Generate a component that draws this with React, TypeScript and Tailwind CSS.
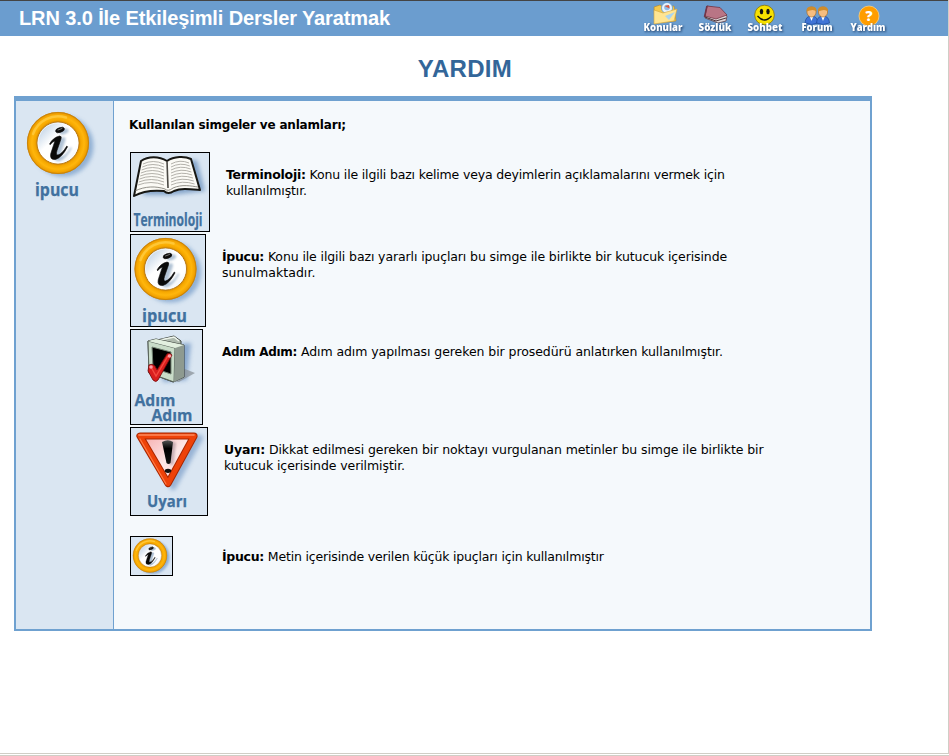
import React from "react";

const LABEL = "'Open Sans', 'Noto Sans', sans-serif";

function Label({ x, y, w, size, children }: { x: number; y: number; w: number; size: number; children: string }) {
  return (
    <text x={x} y={y} textLength={w} lengthAdjust="spacingAndGlyphs" fontFamily={LABEL} fontWeight="700" fontSize={size} fill="#41719f" stroke="#41719f" strokeWidth="0.25">
      {children}
    </text>
  );
}

function Defs() {
  return (
    <svg width="0" height="0" className="absolute">
      <defs>
        <filter id="soft" x="-30%" y="-30%" width="160%" height="160%">
          <feGaussianBlur stdDeviation="2.2" />
        </filter>
        <filter id="soft1" x="-30%" y="-30%" width="160%" height="160%">
          <feGaussianBlur stdDeviation="1" />
        </filter>
        <radialGradient id="gold" gradientUnits="userSpaceOnUse" cx="0" cy="0" r="31.5">
          <stop offset="0.66" stopColor="#d98a00" />
          <stop offset="0.73" stopColor="#f6a800" />
          <stop offset="0.83" stopColor="#ffb60c" />
          <stop offset="0.93" stopColor="#f2a200" />
          <stop offset="1" stopColor="#c07a08" />
        </radialGradient>
        <linearGradient id="glass" x1="0" y1="0" x2="1" y2="1">
          <stop offset="0" stopColor="#a9c2dd" />
          <stop offset="0.4" stopColor="#ffffff" />
          <stop offset="0.75" stopColor="#ffffff" />
          <stop offset="1" stopColor="#dbe4ee" />
        </linearGradient>
        <linearGradient id="ink" x1="0" y1="0" x2="0" y2="1">
          <stop offset="0" stopColor="#555" />
          <stop offset="0.35" stopColor="#000" />
          <stop offset="1" stopColor="#111" />
        </linearGradient>
        <linearGradient id="pink" x1="0" y1="0" x2="1" y2="1">
          <stop offset="0" stopColor="#f5a9a9" />
          <stop offset="0.5" stopColor="#fde6e6" />
          <stop offset="1" stopColor="#f9cccc" />
        </linearGradient>
      </defs>
    </svg>
  );
}

function InfoMark() {
  return (
    <g fill="currentColor" stroke="currentColor" strokeWidth="0.6">
      <ellipse cx="2" cy="-12.500" rx="4.600" ry="2.300" transform="rotate(-20 2 -12.500)" />
      <path d="M-8.500 1.500 Q-5 -5 1.500 -6.500 Q4 -6.500 3 -3.500 L-1 8 Q-2.500 13 0 12.500 Q4 11.500 8.800 3.500 L9.600 4.200 Q4 15 -2.500 17 Q-8.500 17.500 -7.300 11.500 Q-6.500 8.500 -3 -1.500 Q-5.500 -1 -7.800 2.200 Z" />
    </g>
  );
}

function InfoRing() {
  return (
    <g>
      <circle cx="5" cy="3" r="30.5" fill="#7fa3cc" opacity="0.8" filter="url(#soft)" />
      <circle r="31" fill="url(#gold)" />
      <circle r="30.6" fill="none" stroke="#c98208" strokeWidth="0.8" />
      <path d="M-25 -9 A26.500 26.500 0 0 1 8 -25.500" fill="none" stroke="#ffcf48" strokeWidth="2.5" strokeLinecap="round" opacity="0.7" />
      <circle r="21" fill="url(#glass)" stroke="#b87a18" strokeWidth="1" />
      <circle r="20" fill="none" stroke="#fff" strokeWidth="1" opacity="0.6" />
      <g transform="translate(4 1)" color="#9db3ca" opacity="0.8" filter="url(#soft1)"><InfoMark /></g>
      <g transform="translate(0 -0.500)" color="#0a0a0a"><InfoMark /></g>
      <path d="M0 -13 L4 -14.500" stroke="#777" strokeWidth="1" strokeLinecap="round" />
    </g>
  );
}

function Book() {
  const rows = [0, 1, 2, 3, 4, 5, 6, 7];
  return (
    <svg width="78" height="78" className="block overflow-visible">
      <path d="M16 10 L66 7 L74 38 L40 42 L12 42 Z" fill="#6f94c0" opacity="0.8" filter="url(#soft)" />
      <path d="M10 8 C17 3 28 3 36 8 C43 3 54 3 60 6 L69 37 C58 36 50 35 43 38 Q37 42 33 38 C23 37 12 38 3 43 Z" fill="#fbfaf5" stroke="#171713" strokeWidth="2" strokeLinejoin="round" />
      <path d="M4 38 C14 33 25 33 34 36 Q37 39 42 35 C51 31 60 33 67 34" fill="none" stroke="#77756c" strokeWidth="0.8" />
      <path d="M36 8 L37 35" stroke="#4b4944" strokeWidth="1.6" />
      {rows.map((i) => (
        <g key={i} fill="none" stroke="#aaa8a2" strokeWidth="0.9">
          <path d={`M${12 - i * 0.7} ${11 + i * 3} Q${22 - i * 0.3} ${6 + i * 3} 33 ${11 + i * 3}`} />
          <path d={`M40 ${11 + i * 3} Q${49 + i * 0.3} ${6 + i * 3} ${58 + i * 0.8} ${10 + i * 3}`} />
        </g>
      ))}
      <Label x={2.5} y={73} w={69} size={17}>Terminoloji</Label>
    </svg>
  );
}

function Monitor() {
  return (
    <svg width="71" height="94" className="block overflow-visible">
      <path d="M26 16 L60 13 L56 50 L32 52 Z" fill="#7095c3" opacity="0.75" filter="url(#soft)" />
      <path d="M40 51 L54 39 L64 43 L48 52 Z" fill="#8b9399" opacity="0.75" />
      <path d="M26 10 L43 6 L50 11 L50 17 L30 14 Z" fill="#aeb9ad" stroke="#3b423c" />
      <path d="M29 10 L43 7 L48 11" fill="none" stroke="#eef5ec" strokeWidth="1.5" />
      <path d="M17 11 L25 9 L53 15 L53 47 L42 52 L18 43 Z" fill="#9aa79b" stroke="#353b36" />
      <path d="M17 11 L44 18 L43 52 L18 43 Z" fill="#c9dcc8" stroke="#59645b" />
      <path d="M44 18 L53 15 L53 47 L43 52 Z" fill="#8e9a90" />
      <path d="M17 11 L25 9 L53 15 L44 18 Z" fill="#e2efdf" />
      <path d="M21 17 L40 22 L40 44 L22 38 Z" fill="#000" stroke="#718071" />
      <path d="M18 35 Q21 33 24 36 L26 40 L36 24 Q38 22 41 25 L27 50 Q25 53 22 50 L17 41 Z" fill="#d91e1e" stroke="#6e0808" strokeWidth="0.8" />
      <path d="M20 37 L25 46 L37 26" fill="none" stroke="#f2493f" strokeWidth="1.4" />
      <circle cx="38.5" cy="26" r="1.800" fill="#ff9ba5" />
      <circle cx="20" cy="37" r="1.800" fill="#ff9ba5" />
      <Label x={3.5} y={75.5} w={41} size={16.5}>Adım</Label>
      <Label x={20.5} y={90.5} w={41} size={16.5}>Adım</Label>
    </svg>
  );
}

function Warning() {
  return (
    <svg width="76" height="87" className="block overflow-visible">
      <path d="M13 10 L69 10 L42 59 Z" fill="#7d9fc9" stroke="#7d9fc9" strokeWidth="6" strokeLinejoin="round" opacity="0.7" filter="url(#soft)" />
      <path d="M9 8 L63 8 L37 55.500 Z" fill="url(#pink)" stroke="#a82600" strokeWidth="7.200" strokeLinejoin="round" />
      <path d="M9 8 L63 8 L37 55.500 Z" fill="none" stroke="#ee4209" strokeWidth="5.200" strokeLinejoin="round" />
      <path d="M8 7 L63 7" fill="none" stroke="#ff8a5c" strokeWidth="1.600" strokeLinecap="round" />
      <path d="M9 11 L35 56" fill="none" stroke="#ff7a45" strokeWidth="1.200" strokeLinecap="round" />
      <path d="M31 14 Q37 10.500 42 14 L39.500 35 Q37.500 37 35.500 35 Z" fill="#a98f98" opacity="0.6" filter="url(#soft1)" transform="translate(3 1)" />
      <path d="M31 14 Q37 10.500 42 14 L39.500 35 Q37.500 37 35.500 35 Z" fill="url(#ink)" />
      <ellipse cx="37" cy="42.800" rx="3.200" ry="2.100" fill="#111" />
      <Label x={16} y={79} w={40} size={16.5}>Uyarı</Label>
    </svg>
  );
}

function Nav({ label, w, ml, children }: { label: string; w: number; ml: string; children: React.ReactNode }) {
  return (
    <a className={`block ${ml}`}>
      <svg width="50" height="34" className="block overflow-visible">
        {children}
        <text x={25 - w / 2} y="30" textLength={w} lengthAdjust="spacingAndGlyphs" fontFamily={LABEL} fontWeight="800" fontSize="10" fill="#fff" className="drop-shadow-[1px_1px_1px_#1f3f6b]">{label}</text>
      </svg>
    </a>
  );
}

function Person() {
  return (
    <g>
      <path d="M-6.500 9 Q-6 2 0 2 Q6 2 6.500 9 Q0 12 -6.500 9 Z" fill="#3f74d6" stroke="#183f91" strokeWidth="0.6" />
      <path d="M-2 2 L0 7 L2 2 Z" fill="#fff" />
      <ellipse cy="-2" rx="4.600" ry="5" fill="#f6bd80" stroke="#a5651d" strokeWidth="0.6" />
      <path d="M-5 -2.500 Q-5.500 -7.500 0 -7.500 Q5.500 -7.500 5 -2.500 Q2 -5.500 -5 -2.500 Z" fill="#d08c2a" />
    </g>
  );
}

function Row({ box, art, gap, first, second, term, top, tb, ls, ls2 }: {
  box: string; art: React.ReactNode; gap: string; first: string; second?: string; term: string; top: string; tb: string; ls: string; ls2?: string;
}) {
  return (
    <div className="flex items-start">
      <div className={`shrink-0 border border-black bg-[#dae6f2] ${box}`}>{art}</div>
      <p className={`whitespace-nowrap ${gap} ${top}`}>
        <span className={`block ${ls}`}><b className={tb}>{term}</b> {first}</span>
        {second && <span className={`block ${ls2}`}>{second}</span>}
      </p>
    </div>
  );
}

export default function App() {
  return (
    <div className="flex h-[756px] w-[949px] flex-col overflow-hidden bg-white">
      <Defs />
      <div className="flex h-[754px] flex-col border-r border-b border-[#d0cec6]">
        <header className="flex h-9 shrink-0 border-t border-[#444] bg-[#6b9dcf]">
          <h1 className="w-[618px] whitespace-nowrap pl-[19px] font-['Liberation_Sans',Arial,sans-serif] text-[20px] leading-[34px] font-bold tracking-[-0.11px] text-white">LRN 3.0 İle Etkileşimli Dersler Yaratmak</h1>
          <nav className="flex">
            <Nav label="Konular" w={39} ml="ml-[20px]">
              <path d="M16 6 L22 4 L25 6 L36 5 L38 20 L17 22 Z" fill="#f5c94e" stroke="#b98620" strokeWidth="0.6" />
              <circle cx="29" cy="7" r="5.500" fill="#eaf4fd" stroke="#5b98cf" strokeWidth="0.8" />
              <circle cx="29" cy="6.500" r="2.800" fill="#8fbbe6" />
              <path d="M26.500 5 L31 4 L31.500 7.500 Z" fill="#e0563a" />
              <path d="M16 9 L25 12 L39 8 L36 20 L16 23 Z" fill="#ffe592" stroke="#d5a63b" strokeWidth="0.6" />
              <path d="M27 15 L37 11 L31 19 Z" fill="#a9d4ef" />
            </Nav>
            <Nav label="Sözlük" w={33} ml="ml-[2px]">
              <path d="M17 5 L30 8 L37 15 L36 20 L28 22 L15 17 Z" fill="#ded7d9" stroke="#5c3e46" strokeWidth="0.8" />
              <path d="M17 5 L30 6.500 L37 14 L26 18 L15 15 Z" fill="#b97585" stroke="#743545" strokeWidth="0.8" />
              <path d="M15 16 L26 20 L36 17" fill="none" stroke="#4a3037" strokeWidth="1" />
              <path d="M17 5 L14.500 16" stroke="#71364a" strokeWidth="1.600" />
            </Nav>
            <Nav label="Sohbet" w={35} ml="ml-0">
              <circle cx="24.500" cy="14" r="9.800" fill="#f7e100" stroke="#8d7400" strokeWidth="0.8" />
              <ellipse cx="21.500" cy="10.500" rx="1.700" ry="2.700" fill="#111" />
              <ellipse cx="28" cy="10.500" rx="1.700" ry="2.700" fill="#111" />
              <path d="M17.500 15 Q24.500 23 31.500 15" fill="none" stroke="#111" strokeWidth="1.300" />
            </Nav>
            <Nav label="Forum" w={31} ml="ml-[2px]">
              <g transform="translate(19.500 13)"><Person /></g>
              <g transform="translate(31 13)"><Person /></g>
            </Nav>
            <Nav label="Yardım" w={35} ml="ml-[1px]">
              <circle cx="26" cy="15" r="10" fill="#ff9d00" stroke="#ffcf78" strokeWidth="0.8" />
              <text x="26" y="19.500" textAnchor="middle" fontFamily={LABEL} fontWeight="800" fontSize="14" fill="#fff">?</text>
            </Nav>
          </nav>
        </header>
        <h2 className="mt-[18px] mb-[12px] h-[30px] w-[930px] text-center font-['Liberation_Sans',Arial,sans-serif] text-[24px] leading-[30px] font-bold tracking-[0.3px] text-[#336699]">YARDIM</h2>
        <main className="ml-[14px] flex h-[535px] w-[858px] border-2 border-t-[5px] border-[#6fa1d0] bg-[#f5f9fc] font-['DejaVu_Sans',Verdana,sans-serif] text-[12.5px] leading-4 text-black">
          <aside className="w-[98px] shrink-0 border-r border-[#6fa1d0] bg-[#dae6f2]">
            <svg width="97" height="110" className="block">
              <g transform="translate(42 42)"><InfoRing /></g>
              <Label x={19} y={95} w={44} size={17}>ipucu</Label>
            </svg>
          </aside>
          <section className="pl-4 pt-4">
            <p className="mb-[19px] -ml-px whitespace-nowrap text-[12px] font-bold tracking-[-0.18px]">Kullanılan simgeler ve anlamları;</p>
            <div className="flex flex-col gap-[2px]">
              <Row box="h-20 w-20" art={<Book />} gap="ml-4" top="pt-[15px]" tb="tracking-[-0.25px]" ls="tracking-[-0.16px]" ls2="tracking-[-0.12px]" term="Terminoloji:" first="Konu ile ilgili bazı kelime veya deyimlerin açıklamalarını vermek için" second="kullanılmıştır." />
              <Row box="h-[93px] w-[76px]" art={<svg width="74" height="91" className="block overflow-visible"><g transform="translate(34.500 34)"><InfoRing /></g><Label x={11} y={87} w={45} size={17}>ipucu</Label></svg>} gap="ml-4" top="pt-[15px]" tb="tracking-[-0.3px]" ls="tracking-[-0.11px]" ls2="tracking-[0.05px]" term="İpucu:" first="Konu ile ilgili bazı yararlı ipuçları bu simge ile birlikte bir kutucuk içerisinde" second="sunulmaktadır." />
              <Row box="h-24 w-[73px]" art={<Monitor />} gap="ml-[19px]" top="pt-[15px]" tb="text-[12px] tracking-[-0.3px]" ls="tracking-[-0.07px]" term="Adım Adım:" first="Adım adım yapılması gereken bir prosedürü anlatırken kullanılmıştır." />
              <Row box="h-[89px] w-[78px]" art={<Warning />} gap="ml-4" top="pt-[15px]" tb="tracking-[-0.2px]" ls="tracking-[-0.075px]" ls2="tracking-[-0.08px]" term="Uyarı:" first="Dikkat edilmesi gereken bir noktayı vurgulanan metinler bu simge ile birlikte bir" second="kutucuk içerisinde verilmiştir." />
            </div>
            <div className="mt-5">
              <Row box="h-10 w-[43px]" art={<svg width="41" height="38" className="block"><g transform="translate(19 18.500) scale(0.55)"><InfoRing /></g></svg>} gap="ml-[49px]" top="pt-[13px]" tb="tracking-[-0.3px]" ls="tracking-[-0.17px]" term="İpucu:" first="Metin içerisinde verilen küçük ipuçları için kullanılmıştır" />
            </div>
          </section>
        </main>
      </div>
      <div className="mt-[1px] h-px bg-[#d0cec6]" />
    </div>
  );
}
